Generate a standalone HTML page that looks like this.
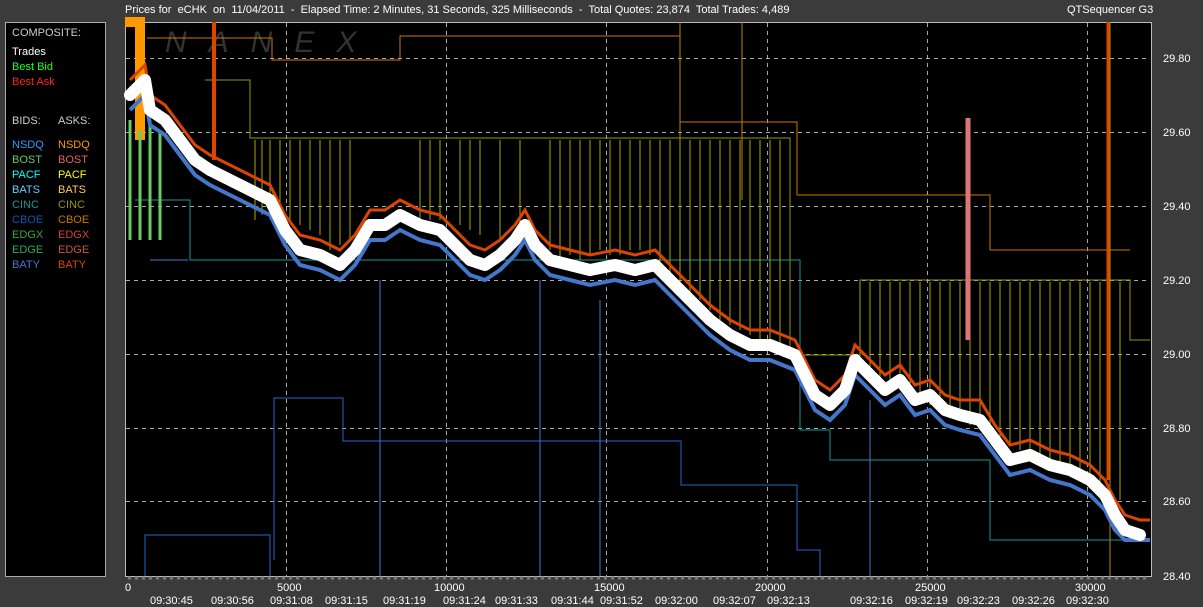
<!DOCTYPE html>
<html><head><meta charset="utf-8"><style>
html,body{margin:0;padding:0;background:#3b3b3b;width:1203px;height:607px;overflow:hidden;font-family:"Liberation Sans",sans-serif;}
.t{position:absolute;color:#fff;font-size:11px;white-space:pre}
#leg{position:absolute;left:5px;top:22px;width:99px;height:553px;background:#000;border:1px solid #aaa;}
#leg div{position:absolute;font-size:11px;white-space:pre}
</style></head><body>
<div class="t" style="left:125px;top:4px">Prices for  eCHK  on  11/04/2011  -  Elapsed Time: 2 Minutes, 31 Seconds, 325 Milliseconds  -  Total Quotes: 23,874  Total Trades: 4,489</div>
<div class="t" style="left:1067px;top:4px">QTSequencer G3</div>
<div id="leg">
<div style="left:6px;top:4px;color:#ccc">COMPOSITE:</div>
<div style="left:6px;top:23px;color:#fff">Trades</div>
<div style="left:6px;top:38px;color:#2f2">Best Bid</div>
<div style="left:6px;top:53px;color:#f22">Best Ask</div>
<div style="left:6px;top:92px;color:#ccc">BIDS:</div><div style="left:52px;top:92px;color:#ccc">ASKS:</div>
<div style="left:6px;top:116px;color:#39f">NSDQ</div><div style="left:52px;top:116px;color:#f90">NSDQ</div>
<div style="left:6px;top:131px;color:#6c6">BOST</div><div style="left:52px;top:131px;color:#d66">BOST</div>
<div style="left:6px;top:146px;color:#0ff">PACF</div><div style="left:52px;top:146px;color:#ff0">PACF</div>
<div style="left:6px;top:161px;color:#6cf">BATS</div><div style="left:52px;top:161px;color:#fc6">BATS</div>
<div style="left:6px;top:176px;color:#199">CINC</div><div style="left:52px;top:176px;color:#990">CINC</div>
<div style="left:6px;top:191px;color:#15a">CBOE</div><div style="left:52px;top:191px;color:#c70">CBOE</div>
<div style="left:6px;top:206px;color:#3a3">EDGX</div><div style="left:52px;top:206px;color:#c43">EDGX</div>
<div style="left:6px;top:221px;color:#3a5">EDGE</div><div style="left:52px;top:221px;color:#c54">EDGE</div>
<div style="left:6px;top:236px;color:#47c">BATY</div><div style="left:52px;top:236px;color:#d40">BATY</div>
</div>
<svg style="position:absolute;left:0;top:0" width="1203" height="607">
<rect x="125.5" y="22.5" width="1026" height="554" fill="#000" stroke="#bbb"/>
<text x="165" y="52" fill="#333" font-size="30" font-style="italic" font-family="Liberation Sans" letter-spacing="22">NANEX</text>
<g stroke="#aaa" stroke-dasharray="4,4" stroke-width="1">
<path d="M126 58.5H1150M126 132.5H1150M126 206.5H1150M126 280.5H1150M126 354.5H1150M126 428.5H1150M126 501.5H1150"/>
<path d="M286.5 23V576M446.5 23V576M606.5 23V576M767.5 23V576M927.5 23V576M1087.5 23V576"/>
</g>
<g fill="none" stroke-width="1">
<path stroke="#c70" d="M147 38H272V60H400V36H680V122H797V195H990V250H1130"/>
<path stroke="#990" d="M205 80H250V138H790V355H860V280H1130V340H1150"/>
<path stroke="#26c" d="M274 560V398H343V441H681V485H797V550H820V576M145 576V535H270V576"/>
<path stroke="#199" d="M135 200H190V260H800V430H830V460H990V540H1150"/>
<path stroke="#47c" d="M150 260H188M600 300V576M870 400V576M380 280V576M540 280V576"/>
<path stroke="#b80" stroke-width="1" d="M680 22V140M742 22V200M1110 22V576"/>
</g>
<g stroke="#aa0" stroke-width="1">
<path d="M255 140V220M262 140V215M270 140V210M280 140V215M290 140V220M300 140V225M310 140V230M320 140V235M330 140V250M340 140V245M350 140V240M420 140V220M430 140V220M440 140V220M460 140V225M470 140V230M480 140V235M500 140V240M520 140V230M550 140V250M560 140V260M570 140V255M580 140V260M590 140V255M600 140V250M610 140V255M620 140V255M630 140V250M640 140V250M650 140V255M660 140V270M670 140V275M680 140V290M690 140V295M700 140V300M710 140V310M720 140V320M730 140V325M740 140V330M750 140V335M760 140V340M770 140V340M780 140V345M860 282V360M870 282V370M880 282V380M890 282V385M900 282V390M910 282V395M920 282V400M930 282V405M940 282V410M950 282V415M960 282V420M970 282V425M980 282V430M990 282V435M1000 282V440M1010 282V445M1020 282V450M1030 282V455M1040 282V460M1050 282V465M1060 282V470M1070 282V475M1080 282V480M1090 282V485M1100 282V490M1120 282V500"/>
</g>
<path d="M968 118V340" stroke="#d77" stroke-width="5"/>
<path d="M1108 22V480" stroke="#d40" stroke-width="3"/>
<path d="M214 22V160" stroke="#d40" stroke-width="4"/>
<path d="M125 22H140V140" stroke="#f90" stroke-width="10" fill="none"/>
<path d="M130 120V240M140 130V240M150 120V240M160 130V240" stroke="#6c6" stroke-width="3"/>
<polyline fill="none" stroke="#d40" stroke-width="3" points="130,80 145,65 150,95 165,105 180,125 195,145 210,155 230,165 250,175 270,185 285,215 300,235 320,240 340,250 355,235 370,210 385,210 400,200 420,210 440,215 455,230 470,245 485,250 500,240 515,225 525,210 535,230 550,245 570,250 590,255 615,250 635,255 655,250 670,265 690,285 710,305 730,320 750,330 770,330 795,340 805,360 815,380 830,390 845,375 855,345 870,360 885,375 900,365 915,385 930,380 945,395 960,400 980,400 995,425 1010,445 1030,440 1050,450 1070,455 1090,465 1105,480 1115,500 1125,515 1140,520 1150,520"/>
<polyline fill="none" stroke="#47c" stroke-width="4" points="130,110 145,95 150,125 165,135 180,155 195,175 210,185 230,195 250,205 270,215 285,245 300,265 320,270 340,280 355,265 370,240 385,240 400,230 420,240 440,245 455,260 470,275 485,280 500,270 515,255 525,240 535,260 550,275 570,280 590,285 615,280 635,285 655,280 670,295 690,315 710,335 730,350 750,360 770,360 795,370 805,390 815,410 830,420 845,405 855,375 870,390 885,405 900,395 915,415 930,410 945,425 960,430 980,435 995,455 1010,475 1030,470 1050,480 1070,485 1090,495 1105,510 1115,530 1125,540 1150,540"/>
<polyline fill="none" stroke="#fff" stroke-width="12" stroke-linejoin="round" stroke-linecap="round" points="130,95 145,80 150,110 165,120 180,140 195,160 210,170 230,180 250,190 270,200 285,230 300,250 320,255 340,265 355,250 370,225 385,225 400,215 420,225 440,230 455,245 470,260 485,265 500,255 515,240 525,225 535,245 550,260 570,265 590,270 615,265 635,270 655,265 670,280 690,300 710,320 730,335 750,345 770,345 795,355 805,375 815,395 830,405 845,390 855,360 870,375 885,390 900,380 915,400 930,395 945,410 960,415 980,420 995,440 1010,460 1030,455 1050,465 1070,470 1090,480 1105,495 1115,515 1125,530 1140,535"/>
<g fill="#fff" font-size="11" font-family="Liberation Sans">
<text x="1163" y="62">29.80</text><text x="1163" y="136">29.60</text><text x="1163" y="210">29.40</text><text x="1163" y="284">29.20</text><text x="1163" y="358">29.00</text><text x="1163" y="432">28.80</text><text x="1163" y="505">28.60</text><text x="1163" y="580">28.40</text>
<text x="125" y="591">0</text><text x="277" y="591">5000</text><text x="434" y="591">10000</text><text x="594" y="591">15000</text><text x="755" y="591">20000</text><text x="915" y="591">25000</text><text x="1075" y="591">30000</text>
<text x="150" y="604">09:30:45</text><text x="211" y="604">09:30:56</text><text x="270" y="604">09:31:08</text><text x="325" y="604">09:31:15</text><text x="383" y="604">09:31:19</text><text x="443" y="604">09:31:24</text><text x="495" y="604">09:31:33</text><text x="551" y="604">09:31:44</text><text x="600" y="604">09:31:52</text><text x="655" y="604">09:32:00</text><text x="713" y="604">09:32:07</text><text x="767" y="604">09:32:13</text><text x="850" y="604">09:32:16</text><text x="905" y="604">09:32:19</text><text x="957" y="604">09:32:23</text><text x="1012" y="604">09:32:26</text><text x="1066" y="604">09:32:30</text>
</g>
<path d="M128 578h1020" stroke="#777" stroke-width="3" stroke-dasharray="3,4"/>
</svg>
</body></html>
